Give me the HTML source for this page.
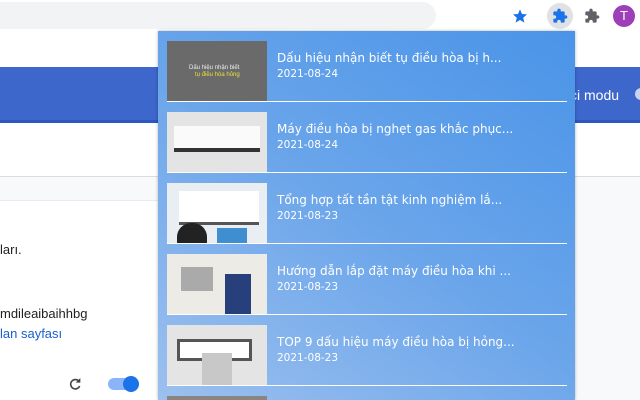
<!DOCTYPE html>
<html style="width:640px;height:400px;overflow:hidden"><head><meta charset="utf-8"><style>
*{margin:0;padding:0;box-sizing:border-box}
body{width:640px;height:400px;overflow:hidden;position:relative;background:#fff;font-family:"Liberation Sans",Arial,sans-serif}
.abs{position:absolute}
.item{position:absolute;left:9px;width:400px;height:61px;border-bottom:1.5px solid #fff}
.thumb{position:absolute;left:0;top:0;width:100px;height:60px;overflow:hidden}
.t{position:absolute;left:110px;top:10px;color:#fff;font:12px "DejaVu Sans",Verdana,sans-serif;white-space:nowrap}
.d{position:absolute;left:110px;top:27px;color:#fff;font:10.5px "DejaVu Sans",Verdana,sans-serif}
</style></head><body>
<div class="abs" style="left:0;top:0;width:640px;height:31px;background:#fff"></div>
<div class="abs" style="left:-20px;top:2px;width:456px;height:27px;background:#f1f3f4;border-radius:14px"></div>
<svg class="abs" style="left:512px;top:8px" width="16" height="16" viewBox="0 0 24 24"><path d="M12 2l3 7 7.5.6-5.7 5 1.8 7.4L12 18l-6.6 4 1.8-7.4-5.7-5L9 9z" fill="#1a73e8"/></svg>
<div class="abs" style="left:547px;top:3px;width:26px;height:26px;border-radius:13px;background:#dfe1e5"></div>
<svg class="abs" style="left:552px;top:8px" width="16" height="16" viewBox="0 0 24 24"><path d="M20.5 11H19V7a2 2 0 0 0-2-2h-4V3.5a2.5 2.5 0 0 0-5 0V5H4a2 2 0 0 0-2 2v3.8h1.5a2.7 2.7 0 0 1 0 5.4H2V20a2 2 0 0 0 2 2h3.8v-1.5a2.7 2.7 0 0 1 5.4 0V22H17a2 2 0 0 0 2-2v-4h1.5a2.5 2.5 0 0 0 0-5z" fill="#1a73e8"/></svg>
<svg class="abs" style="left:584px;top:8px" width="16" height="16" viewBox="0 0 24 24"><path d="M20.5 11H19V7a2 2 0 0 0-2-2h-4V3.5a2.5 2.5 0 0 0-5 0V5H4a2 2 0 0 0-2 2v3.8h1.5a2.7 2.7 0 0 1 0 5.4H2V20a2 2 0 0 0 2 2h3.8v-1.5a2.7 2.7 0 0 1 5.4 0V22H17a2 2 0 0 0 2-2v-4h1.5a2.5 2.5 0 0 0 0-5z" fill="#5f6368"/></svg>
<div class="abs" style="left:613px;top:5px;width:22px;height:22px;border-radius:11px;background:#9c3fb8;color:#fff;font-size:13px;text-align:center;line-height:22px">T</div>
<div class="abs" style="left:0;top:67px;width:640px;height:56px;background:#3d67cb;border-bottom:3px solid #2c57be"></div>
<div class="abs" style="left:570px;top:87px;color:#fff;font-size:14px">ci modu</div>
<div class="abs" style="left:635px;top:88px;width:12px;height:12px;border-radius:6px;background:#c8d4f0"></div>
<div class="abs" style="left:0;top:176px;width:640px;height:224px;background:#f8f9fa;border-top:1px solid #dadce0"></div>
<div class="abs" style="left:0;top:200px;width:158px;height:200px;background:#fff;border-top:1px solid #e8eaed"></div>
<div class="abs" style="left:0;top:242px;font-size:13px;color:#202124">ları.</div>
<div class="abs" style="left:0;top:306px;font-size:13px;color:#202124">mdileaibaihhbg</div>
<div class="abs" style="left:0;top:326px;font-size:13px;color:#1a5fd0">lan sayfası</div>
<svg class="abs" style="left:67px;top:376px" width="16" height="16" viewBox="0 0 24 24"><path d="M18 8A7 7 0 1 0 19 15" fill="none" stroke="#444" stroke-width="2.4"/><path d="M20 3v7h-7z" fill="#444"/></svg>
<div class="abs" style="left:108px;top:378px;width:28px;height:12px;border-radius:6px;background:#8ab4f8"></div>
<div class="abs" style="left:123px;top:376px;width:16px;height:16px;border-radius:8px;background:#1a73e8"></div>
<div class="abs" style="left:158px;top:31px;width:417px;height:369px;overflow:hidden;background:linear-gradient(215deg,#4a94e8 0%,#6aa5ea 50%,#9cc0ef 100%);box-shadow:0 0 3px rgba(0,0,0,.3)">
 <div class="item" style="top:10px"><div class="thumb" style="background:#6a6a6a"><div style="position:absolute;left:22px;top:24px;color:#eee;font-size:6px">Dấu hiệu nhận biết</div><div style="position:absolute;left:28px;top:31px;color:#e8e23a;font-size:6px">tụ điều hòa hỏng</div></div><div class="t">Dấu hiệu nhận biết tụ điều hòa bị h...</div><div class="d">2021-08-24</div></div>
 <div class="item" style="top:81px"><div class="thumb" style="background:#e4e4e4"><div style="position:absolute;left:7px;top:14px;width:86px;height:26px;background:#fafafa;border-bottom:4px solid #333"></div></div><div class="t">Máy điều hòa bị nghẹt gas khắc phục...</div><div class="d">2021-08-24</div></div>
 <div class="item" style="top:152px"><div class="thumb" style="background:#e8eef2"><div style="position:absolute;left:12px;top:8px;width:80px;height:34px;background:#fff;border-bottom:3px solid #555"></div><div style="position:absolute;left:10px;top:40px;width:30px;height:20px;border-radius:14px 14px 0 0;background:#222"></div><div style="position:absolute;left:50px;top:45px;width:30px;height:15px;background:#3f8fd0"></div></div><div class="t">Tổng hợp tất tần tật kinh nghiệm lắ...</div><div class="d">2021-08-23</div></div>
 <div class="item" style="top:223px"><div class="thumb" style="background:#ecebe5"><div style="position:absolute;left:14px;top:13px;width:32px;height:24px;background:#aaa"></div><div style="position:absolute;left:58px;top:20px;width:26px;height:40px;background:#273f7a"></div></div><div class="t">Hướng dẫn lắp đặt máy điều hòa khi ...</div><div class="d">2021-08-23</div></div>
 <div class="item" style="top:294px"><div class="thumb" style="background:#e4e4e4"><div style="position:absolute;left:10px;top:14px;width:75px;height:22px;background:#fff;border:3px solid #555"></div><div style="position:absolute;left:35px;top:28px;width:30px;height:32px;background:#c8c8c8"></div></div><div class="t">TOP 9 dấu hiệu máy điều hòa bị hỏng...</div><div class="d">2021-08-23</div></div>
 <div class="item" style="top:365px"><div class="thumb" style="background:#8a8580"></div></div>
</div>
</body></html>
